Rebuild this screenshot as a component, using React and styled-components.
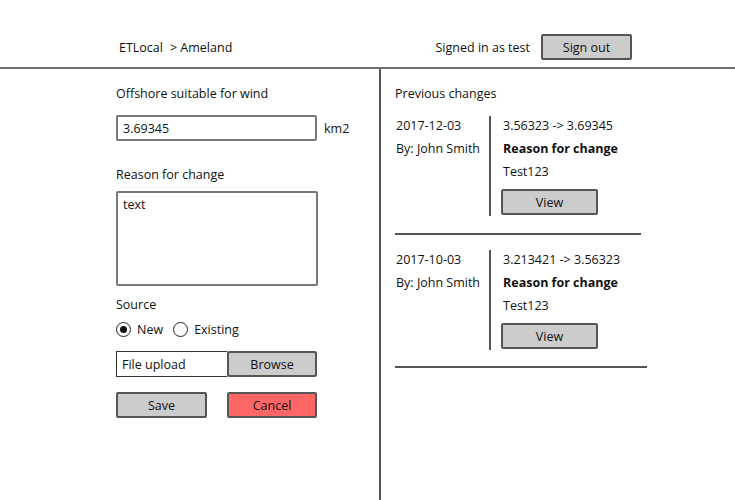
import React from 'react'
import styled, { createGlobalStyle } from 'styled-components'

const Global = createGlobalStyle`
  html, body { margin: 0; padding: 0; background: #fff; }
  body { font-family: "Open Sans", "DejaVu Sans", sans-serif; font-size: 12.5px; color: #111; }
  * { box-sizing: border-box; }
`

const Page = styled.div`
  width: 735px;
  height: 500px;
  display: flex;
  flex-direction: column;
  overflow: hidden;
`

const Header = styled.header`
  height: 69px;
  border-bottom: 2px solid #6f6f6f;
  display: flex;
  align-items: flex-end;
  justify-content: space-between;
  padding: 0 103px 7px 119px;
`

const Crumbs = styled.div`
  display: flex;
  gap: 7px;
  height: 26px;
  align-items: center;
`

const UserBox = styled.div`
  display: flex;
  align-items: center;
  gap: 11px;
`

const Button = styled.button`
  font: inherit;
  color: #111;
  width: ${p => p.$w || 91}px;
  height: 26px;
  background: ${p => (p.$danger ? '#ff6666' : '#cccccc')};
  border: 2px solid #555;
  border-radius: 2px;
  padding: 0;
  display: flex;
  align-items: center;
  justify-content: center;
`

const Main = styled.div`
  flex: 1;
  display: grid;
  grid-template-columns: 381px 1fr;
`

const LeftCol = styled.section`
  border-right: 2px solid #555;
  padding: 16px 0 0 116px;
  display: flex;
  flex-direction: column;
`

const Label = styled.div`
  height: 18px;
  line-height: 18px;
  margin-top: ${p => p.$mt || 0}px;
`

const InputRow = styled.div`
  display: flex;
  align-items: center;
  gap: 7px;
  margin-top: ${p => p.$mt || 0}px;
`

const TextInput = styled.div`
  width: 201px;
  height: 26px;
  border: 2px solid #777;
  border-radius: 2px;
  padding: 0 5px;
  display: flex;
  align-items: center;
`

const TextArea = styled.div`
  width: 202px;
  height: 95px;
  border: 2px solid #777;
  border-radius: 2px;
  padding: 3px 5px;
  margin-top: 7px;
`

const RadioRow = styled.div`
  display: flex;
  align-items: center;
  margin-top: 6px;
  height: 18px;
`

const Radio = styled.span`
  width: 15px;
  height: 15px;
  border: 1.5px solid #222;
  border-radius: 50%;
  display: inline-flex;
  align-items: center;
  justify-content: center;
  margin-right: 6px;
  &::after {
    content: '';
    width: 7px;
    height: 7px;
    border-radius: 50%;
    background: ${p => (p.$on ? '#111' : 'transparent')};
  }
`

const RadioText = styled.span`
  margin-right: 10px;
`

const Upload = styled.div`
  display: flex;
  margin-top: 13px;
`

const UploadField = styled.div`
  width: 111px;
  height: 26px;
  border: 1.5px solid #333;
  border-right: none;
  padding: 0 5px;
  display: flex;
  align-items: center;
`

const Actions = styled.div`
  display: flex;
  gap: 20px;
  margin-top: 15px;
`

const RightCol = styled.section`
  padding: 16px 0 0 14px;
  display: flex;
  flex-direction: column;
`

const Change = styled.div`
  width: ${p => p.$w}px;
  border-bottom: 2px solid #555;
  padding: ${p => (p.$first ? '13px 0 17px 1px' : '15px 0 16px 1px')};
  display: grid;
  grid-template-columns: 93px 1fr;
`

const Meta = styled.div`
  display: flex;
  flex-direction: column;
  gap: 5px;
  padding-top: 1px;
`

const Detail = styled.div`
  border-left: 2px solid #555;
  padding: 1px 0 1px 12px;
  display: flex;
  flex-direction: column;
  gap: 5px;
`

const Line = styled.div`
  height: 18px;
  line-height: 18px;
  font-weight: ${p => (p.$bold ? 700 : 400)};
`

const ViewButton = styled(Button)`
  margin: 3px 0 0 -2px;
`

const changes = [
  { date: '2017-12-03', by: 'John Smith', from: '3.56323', to: '3.69345', reason: 'Test123', w: 246 },
  { date: '2017-10-03', by: 'John Smith', from: '3.213421', to: '3.56323', reason: 'Test123', w: 252 },
]

export default function App() {
  return (
    <Page>
      <Global />
      <Header>
        <Crumbs>
          <span>ETLocal</span>
          <span>&gt; Ameland</span>
        </Crumbs>
        <UserBox>
          <span>Signed in as test</span>
          <Button $w={91}>Sign out</Button>
        </UserBox>
      </Header>
      <Main>
        <LeftCol>
          <Label>Offshore suitable for wind</Label>
          <InputRow $mt={12}>
            <TextInput>3.69345</TextInput>
            <span>km2</span>
          </InputRow>
          <Label $mt={25}>Reason for change</Label>
          <TextArea>text</TextArea>
          <Label $mt={10}>Source</Label>
          <RadioRow>
            <Radio $on />
            <RadioText>New</RadioText>
            <Radio />
            <RadioText>Existing</RadioText>
          </RadioRow>
          <Upload>
            <UploadField>File upload</UploadField>
            <Button $w={90}>Browse</Button>
          </Upload>
          <Actions>
            <Button $w={91}>Save</Button>
            <Button $w={90} $danger>Cancel</Button>
          </Actions>
        </LeftCol>
        <RightCol>
          <Label>Previous changes</Label>
          {changes.map((c, i) => (
            <Change key={i} $w={c.w} $first={i === 0}>
              <Meta>
                <Line>{c.date}</Line>
                <Line>By: {c.by}</Line>
              </Meta>
              <Detail>
                <Line>{c.from} -&gt; {c.to}</Line>
                <Line $bold>Reason for change</Line>
                <Line>{c.reason}</Line>
                <ViewButton $w={97}>View</ViewButton>
              </Detail>
            </Change>
          ))}
        </RightCol>
      </Main>
    </Page>
  )
}
